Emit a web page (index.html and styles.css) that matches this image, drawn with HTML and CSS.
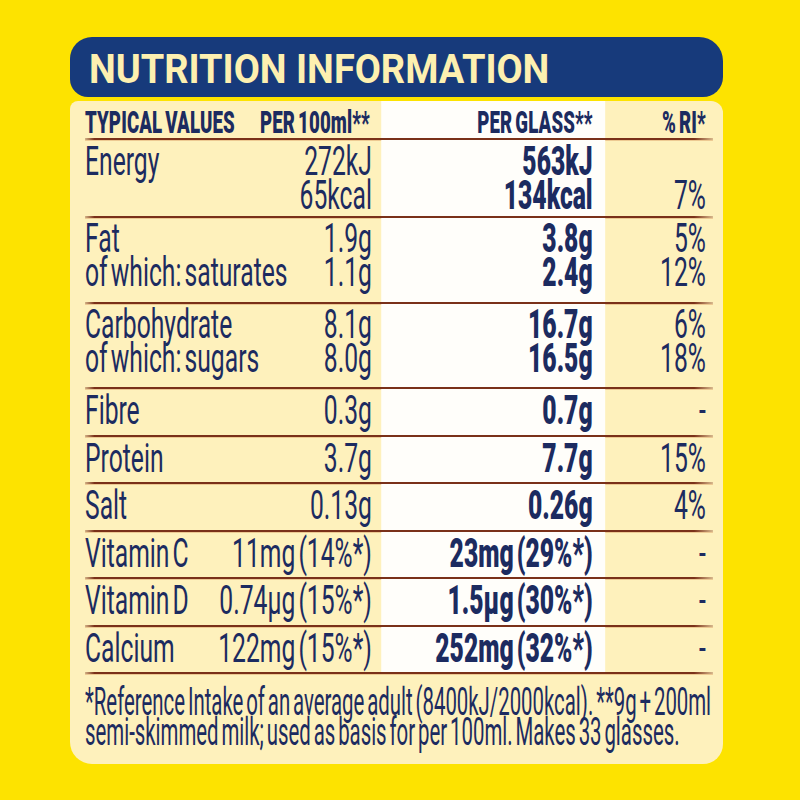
FILE: index.html
```html
<!DOCTYPE html>
<html lang="en">
<head>
<meta charset="utf-8">
<title>Nutrition Information</title>
<link rel="stylesheet" href="styles.css">
</head>
<body>
<div class="page">
  <header class="banner"><h1 class="title">NUTRITION INFORMATION</h1></header>
  <section class="panel">
    <div class="sheet">
      <div class="row head">
        <div class="a"><span>TYPICAL VALUES</span><span>PER 100ml**</span></div>
        <div class="b">PER GLASS**</div>
        <div class="c">% RI*</div>
      </div>
      <div class="rule"></div>
      <div class="row energy">
        <div class="a"><span>Energy</span><span class="num">272kJ<br>65kcal</span></div>
        <div class="b">563kJ<br>134kcal</div>
        <div class="c end">7%</div>
      </div>
      <div class="rule"></div>
      <div class="row two">
        <div class="a"><span>Fat<br>of which: saturates</span><span class="num">1.9g<br>1.1g</span></div>
        <div class="b">3.8g<br>2.4g</div>
        <div class="c">5%<br>12%</div>
      </div>
      <div class="rule"></div>
      <div class="row two carb">
        <div class="a"><span>Carbohydrate<br>of which: sugars</span><span class="num">8.1g<br>8.0g</span></div>
        <div class="b">16.7g<br>16.5g</div>
        <div class="c">6%<br>18%</div>
      </div>
      <div class="rule"></div>
      <div class="row">
        <div class="a"><span>Fibre</span><span class="num">0.3g</span></div>
        <div class="b">0.7g</div>
        <div class="c">-</div>
      </div>
      <div class="rule"></div>
      <div class="row">
        <div class="a"><span>Protein</span><span class="num">3.7g</span></div>
        <div class="b">7.7g</div>
        <div class="c">15%</div>
      </div>
      <div class="rule"></div>
      <div class="row">
        <div class="a"><span>Salt</span><span class="num">0.13g</span></div>
        <div class="b">0.26g</div>
        <div class="c">4%</div>
      </div>
      <div class="rule"></div>
      <div class="row">
        <div class="a"><span>Vitamin C</span><span class="num">11mg (14%*)</span></div>
        <div class="b">23mg (29%*)</div>
        <div class="c">-</div>
      </div>
      <div class="rule"></div>
      <div class="row">
        <div class="a"><span>Vitamin D</span><span class="num">0.74µg (15%*)</span></div>
        <div class="b">1.5µg (30%*)</div>
        <div class="c">-</div>
      </div>
      <div class="rule"></div>
      <div class="row">
        <div class="a"><span>Calcium</span><span class="num">122mg (15%*)</span></div>
        <div class="b">252mg (32%*)</div>
        <div class="c">-</div>
      </div>
      <div class="rule"></div>
      <p class="foot"><span class="foot-text">*Reference Intake of an average adult (8400kJ/2000kcal). **9g + 200ml<br>semi-skimmed milk; used as basis for per 100ml. Makes 33 glasses.</span></p>
    </div>
  </section>
</div>
</body>
</html>
```

FILE: styles.css
```css
html, body {
  margin: 0;
  padding: 0;
}
body {
  background: #fde300;
  width: 800px;
  height: 800px;
  overflow: hidden;
  font-family: Roboto, "Liberation Sans", sans-serif;
  color: #1c2b60;
}
.page {
  padding: 37px 0 0 70px;
  width: 653px;
}
.banner {
  height: 60px;
  background: #173a7b;
  border-radius: 22px 24px 20px 18px;
  padding-left: 19px;
}
.title {
  margin: 0;
  display: inline-block;
  font-size: 41px;
  font-weight: 700;
  line-height: 60px;
  padding-top: 2px;
  height: 58px;
  color: #fdf0b0;
  white-space: nowrap;
  transform: scaleX(0.925);
  transform-origin: left center;
}
.panel {
  margin-top: 4px;
  background: #fef1bc;
  border-radius: 8px 12px 20px 22px;
  overflow: hidden;
}
.sheet {
  width: calc(100% / 0.602);
  box-sizing: border-box;
  padding: 0 16.6px 0 24.9px;
  transform: scaleX(0.602);
  transform-origin: left top;
  font-size: 41px;
  font-weight: 400;
  word-spacing: -5px;
  white-space: nowrap;
}
.row {
  display: grid;
  grid-template-columns: 491.7px 372.1px 1fr;
}
.row > * {
  padding: 4px 0 7.5px;
  line-height: 34px;
}
.row.two > * {
  padding: 3px 0 13px;
}
.row.carb > * {
  padding-bottom: 12px;
}
.row.energy > * {
  padding: 4px 0 4px;
}
.row.head > * {
  padding: 6px 0 0;
  line-height: 31px;
  font-size: 31px;
  font-weight: 900;
  letter-spacing: 0.2px;
  word-spacing: -3px;
}
.a {
  display: flex;
  justify-content: space-between;
  padding-right: 15.1px !important;
}
.row.head .a {
  padding-right: 18.4px !important;
}
.num {
  text-align: right;
}
.b {
  background: #fffefa;
  text-align: right;
  padding-right: 20.5px !important;
  font-weight: 900;
}
.c {
  text-align: right;
  padding-right: 11.9px !important;
}
.c.end {
  align-self: end;
}
.rule {
  height: 2px;
  background: linear-gradient(to right, rgba(125, 50, 25, 0.35), #7a3119 1.5%, #7a3119 97%, rgba(125, 50, 25, 0.3));
  box-shadow: 0 1px 0 rgba(200, 110, 50, 0.3);
}
.foot {
  margin: 0;
  padding: 13px 0 17px;
  font-size: 38px;
  line-height: 30px;
}
.foot-text {
  display: block;
  width: calc(100% / 0.89);
  transform: scaleX(0.89);
  transform-origin: left top;
  word-spacing: -4px;
}
```
